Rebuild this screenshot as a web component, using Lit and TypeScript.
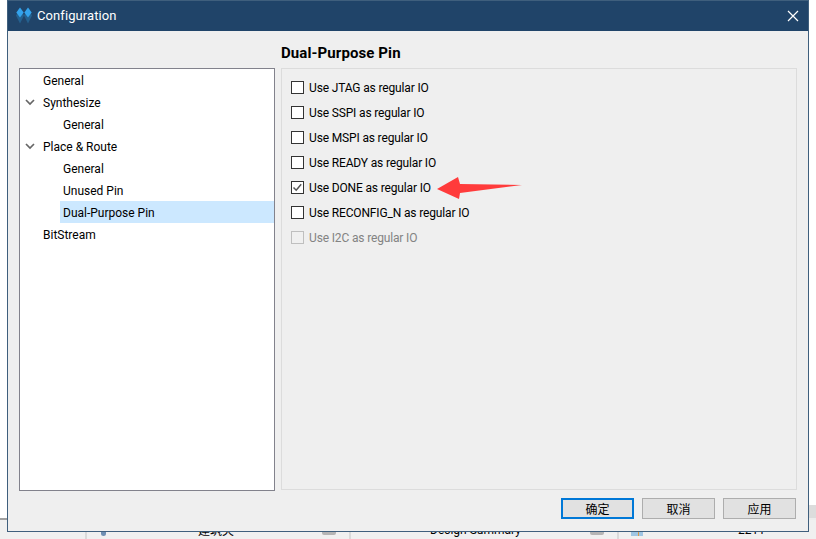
import { LitElement, html, css, svg } from "lit";
import { customElement } from "lit/decorators.js";

const TREE: { label: string; level: number; arrow?: boolean; selected?: boolean }[] = [
  { label: "General", level: 0 },
  { label: "Synthesize", level: 0, arrow: true },
  { label: "General", level: 1 },
  { label: "Place & Route", level: 0, arrow: true },
  { label: "General", level: 1 },
  { label: "Unused Pin", level: 1 },
  { label: "Dual-Purpose Pin", level: 1, selected: true },
  { label: "BitStream", level: 0 },
];

const OPTIONS: { label: string; checked?: boolean; disabled?: boolean }[] = [
  { label: "Use JTAG as regular IO" },
  { label: "Use SSPI as regular IO" },
  { label: "Use MSPI as regular IO" },
  { label: "Use READY as regular IO" },
  { label: "Use DONE as regular IO", checked: true },
  { label: "Use RECONFIG_N as regular IO" },
  { label: "Use I2C as regular IO", disabled: true },
];

@customElement("app-root")
export class AppRoot extends LitElement {
  static styles = css`
    :host {
      display: block;
      width: 816px;
      height: 539px;
      overflow: hidden;
      position: relative;
      background: #fff;
      font-family: Roboto, "Noto Sans", "Noto Sans CJK SC", sans-serif;
      font-size: 12px;
      color: #000;
    }
    .backdrop {
      height: 539px;
      display: flex;
      flex-direction: column;
      justify-content: flex-end;
    }
    .band {
      height: 13px;
      width: 8px;
      align-self: flex-end;
      background: #dcdcdc;
    }
    .rule {
      height: 2px;
      background: #ececec;
    }
    .rule div {
      width: 8px;
      height: 2px;
      background: #a0a0a0;
    }
    .strip {
      height: 19px;
      background: #f0f0f0;
      display: flex;
      align-items: center;
    }
    .cell {
      box-sizing: border-box;
      height: 19px;
      display: flex;
      align-items: center;
      border-right: 2px solid #dadada;
      flex: none;
      position: relative;
    }
    .c0 { width: 87px; }
    .c1 { width: 264px; padding-left: 14px; }
    .c2 { width: 268px; padding-left: 79px; }
    .c3 { flex: 1; border-right: none; padding-left: 12px; }
    .dot {
      width: 5px;
      height: 15px;
      border-radius: 3px;
      background: #6f8fb3;
      margin-bottom: 2px;
    }
    .cell-text { white-space: nowrap; }
    .c1 .cell-text { margin-left: 92px; font-family: "Noto Sans CJK SC", sans-serif; }
    .grip {
      width: 14px;
      height: 14px;
      border-radius: 2px;
      background: #b5b5b5;
      position: absolute;
      top: 1px;
    }
    .c1 .grip { left: 235px; }
    .c2 .grip { left: 239px; }
    .pic {
      width: 12px;
      height: 15px;
      background: linear-gradient(to right, #9fc6e4 55%, #d99a4a 55%, #d99a4a 70%, #9fc6e4 70%);
      margin-bottom: 2px;
    }
    .c3 .cell-text { margin-left: 95px; }
    .dialog {
      position: absolute;
      left: 7px;
      top: 0;
      width: 802px;
      height: 532px;
      box-sizing: border-box;
      border: 1px solid #3f5f7d;
      background: #efefef;
      display: flex;
      flex-direction: column;
    }
    .titlebar {
      height: 30px;
      flex: none;
      background: #204469;
      color: #fff;
      display: flex;
      align-items: center;
      padding: 0 9px 0 8px;
      font-size: 13px;
    }
    .logo { width: 16px; height: 17px; margin-right: 5px; margin-top: -1px; }
    .title { flex: 1; margin-top: -2px; letter-spacing: 0.08px; }
    .close { width: 12px; height: 12px; }
    .body {
      flex: 1;
      display: flex;
      flex-direction: column;
      padding: 12px 11px 0 11px;
      min-height: 0;
    }
    .heading {
      height: 25px;
      line-height: 21px;
      padding-left: 262px;
      font-size: 15px;
      font-weight: 700;
      letter-spacing: 0.1px;
    }
    .panes {
      display: flex;
      align-items: flex-start;
      gap: 6px;
      height: 423px;
    }
    .tree {
      width: 256px;
      height: 423px;
      box-sizing: border-box;
      border: 1px solid #82828c;
      background: #fff;
      flex: none;
    }
    .row {
      height: 22px;
      display: flex;
      align-items: center;
      position: relative;
      font-size: 12px;
    }
    .row .label { padding-left: 3px; flex: 1; height: 22px; line-height: 24px; }
    .row.l0 { padding-left: 20px; }
    .row.l1 { padding-left: 40px; }
    .row.selected .label { background: #cce8ff; }
    .arrow {
      position: absolute;
      left: 5px;
      top: 8px;
      width: 10px;
      height: 7px;
    }
    .group {
      flex: 1;
      height: 422px;
      box-sizing: border-box;
      border: 1px solid #dcdcdc;
      padding: 6px 0 0 9px;
    }
    .opt {
      height: 25px;
      display: flex;
      align-items: center;
      gap: 5px;
      position: relative;
      letter-spacing: -0.15px;
    }
    .box {
      width: 13px;
      height: 13px;
      box-sizing: border-box;
      border: 1px solid #333;
      background: #fff;
      flex: none;
      display: flex;
    }
    .box svg { width: 11px; height: 11px; }
    .opt.disabled { color: #838383; }
    .opt.disabled .box { border-color: #bfbfbf; background: #f0f0f0; }
    .pointer {
      position: absolute;
      left: 146px;
      top: 2px;
      width: 85px;
      height: 22px;
    }
    .footer {
      height: 40px;
      display: flex;
      justify-content: flex-end;
      align-items: flex-start;
      gap: 8px;
      padding: 7px 1px 0 0;
      box-sizing: border-box;
    }
    .btn {
      width: 73px;
      height: 21px;
      box-sizing: border-box;
      border: 1px solid #adadad;
      background: #e1e1e1;
      display: flex;
      align-items: center;
      justify-content: center;
      font-size: 12px;
      font-family: "Noto Sans CJK SC", sans-serif;
    }
    .btn.default { border: 2px solid #0078d7; }
  `;

  private logo() {
    const column = (cx: number) => svg`
      <path d="M${cx} 1l4 7.5l-4 8l-4 -8z" fill="#24618f" />
      <path d="M${cx} 0.5l3.7 5l-3.7 5l-3.7 -5z" fill="#33a3ec" />
    `;
    return html`<svg class="logo" viewBox="0 0 16 17">${column(4)}${column(12)}</svg>`;
  }

  render() {
    return html`
      <div class="backdrop">
        <div class="band"></div>
        <div class="rule"><div></div></div>
        <div class="strip">
          <div class="cell c0"></div>
          <div class="cell c1">
            <span class="dot"></span>
            <span class="cell-text">建筑夹</span>
            <span class="grip"></span>
          </div>
          <div class="cell c2">
            <span class="cell-text">Design Summary</span>
            <span class="grip"></span>
          </div>
          <div class="cell c3">
            <span class="pic"></span>
            <span class="cell-text">2211</span>
          </div>
        </div>
      </div>
      <div class="dialog">
        <div class="titlebar">
          ${this.logo()}
          <span class="title">Configuration</span>
          <svg class="close" viewBox="0 0 12 12"><path d="M1 1l10 10M11 1L1 11" stroke="#fff" stroke-width="1.2" fill="none" /></svg>
        </div>
        <div class="body">
          <div class="heading">Dual-Purpose Pin</div>
          <div class="panes">
            <div class="tree">
              ${TREE.map(
                (r) => html`<div class="row l${r.level} ${r.selected ? "selected" : ""}">
                  ${r.arrow
                    ? html`<svg class="arrow" viewBox="0 0 10 7"><path d="M1 1l4 4l4 -4" stroke="#666" stroke-width="1.7" fill="none" /></svg>`
                    : ""}
                  <span class="label">${r.label}</span>
                </div>`
              )}
            </div>
            <div class="group">
              ${OPTIONS.map(
                (o) => html`<div class="opt ${o.disabled ? "disabled" : ""}">
                  <span class="box">${o.checked
                    ? html`<svg viewBox="0 0 11 11"><path d="M1.5 5.5l2.7 2.7l5 -6" stroke="#555" stroke-width="1.5" fill="none" /></svg>`
                    : ""}</span>
                  <span>${o.label}</span>
                  ${o.checked
                    ? html`<svg class="pointer" viewBox="0 0 85 22"><path d="M0 12L21 0L23 7L85 8L23 16L22 22z" fill="#ff3b3b" /></svg>`
                    : ""}
                </div>`
              )}
            </div>
          </div>
          <div class="footer">
            <div class="btn default">确定</div>
            <div class="btn">取消</div>
            <div class="btn">应用</div>
          </div>
        </div>
      </div>
    `;
  }
}
